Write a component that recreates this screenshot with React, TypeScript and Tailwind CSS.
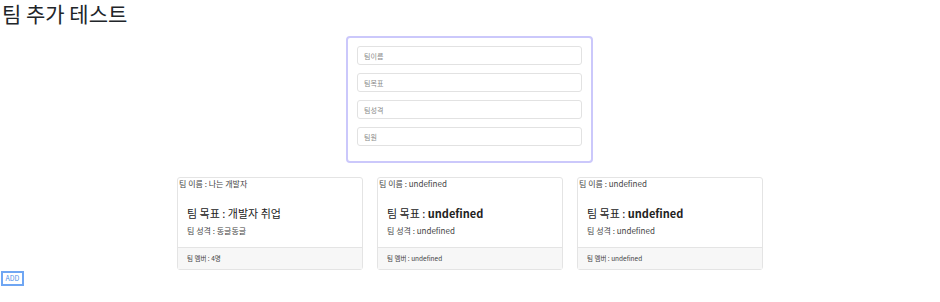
import { useState } from 'react';

type Team = {
  name?: string;
  goal?: string;
  character?: string;
  members?: string;
};

const initialTeams: Team[] = [
  { name: '나는 개발자', goal: '개발자 취업', character: '동글동글', members: '4명' },
  {},
  {},
];

function TeamCard({ team }: { team: Team }) {
  const show = (v?: string) => (v === undefined ? 'undefined' : v);
  return (
    <div className="w-[186px] border border-[#e4e4e4] rounded-[3px] bg-white flex flex-col">
      <div className="h-[12px] leading-[12px] text-[8px] text-[#444] pl-px">
        팀 이름 : {show(team.name)}
      </div>
      <div className="px-[9px] pt-[16px] pb-[11px]">
        <div className="h-[14px] leading-[14px] text-[11px] text-[#222]">
          팀 목표 : <span className={team.goal ? '' : 'font-bold'}>{show(team.goal)}</span>
        </div>
        <div className="mt-[6px] h-[10px] leading-[10px] text-[8px] text-[#444]">
          팀 성격 : {show(team.character)}
        </div>
      </div>
      <div className="border-t border-[#e4e4e4] bg-[#f7f7f7] h-[22px] leading-[21px] px-[9px] text-[6.5px] text-[#444]">
        팀 멤버 : {show(team.members)}
      </div>
    </div>
  );
}

export default function App() {
  const [teams, setTeams] = useState<Team[]>(initialTeams);
  const [form, setForm] = useState<Team>({});

  const fields: { key: keyof Team; label: string }[] = [
    { key: 'name', label: '팀이름' },
    { key: 'goal', label: '팀목표' },
    { key: 'character', label: '팀성격' },
    { key: 'members', label: '팀원' },
  ];

  return (
    <div
      className="w-[940px] h-[302px] bg-white text-[#212529] overflow-hidden"
      style={{ fontFamily: '"Noto Sans CJK KR", "Noto Sans", sans-serif' }}
    >
      <h1 className="text-[21px] leading-[27px] pl-[2px] font-normal">팀 추가 테스트</h1>

      {/* 입력 폼 */}
      <div className="flex justify-center mt-[9px] pr-px">
        <div className="w-[247px] border-2 border-[#cbc8fb] rounded-[4px] pt-[8px] pb-[15px] px-[9px] flex flex-col gap-[8px]">
          {fields.map((f) => (
            <input
              key={f.key}
              placeholder={f.label}
              value={form[f.key] ?? ''}
              onChange={(e) => setForm({ ...form, [f.key]: e.target.value })}
              className="h-[19px] w-full border border-[#e2e2e2] rounded-[3px] px-[6px] text-[7px] text-[#333] placeholder:text-[#8a8a8a] outline-none"
            />
          ))}
        </div>
      </div>

      {/* 팀 카드 목록 */}
      <div className="flex justify-center gap-[14px] mt-[14px]">
        {teams.map((t, i) => (
          <TeamCard key={i} team={t} />
        ))}
      </div>

      <button
        onClick={() => setTeams([...teams, form])}
        className="ml-[1px] mt-[1px] h-[15px] w-[23px] border-2 border-[#6fa6f3] text-[#4f8fe8] bg-white text-[7px] leading-[11px] flex items-center justify-center"
      >
        ADD
      </button>
    </div>
  );
}
